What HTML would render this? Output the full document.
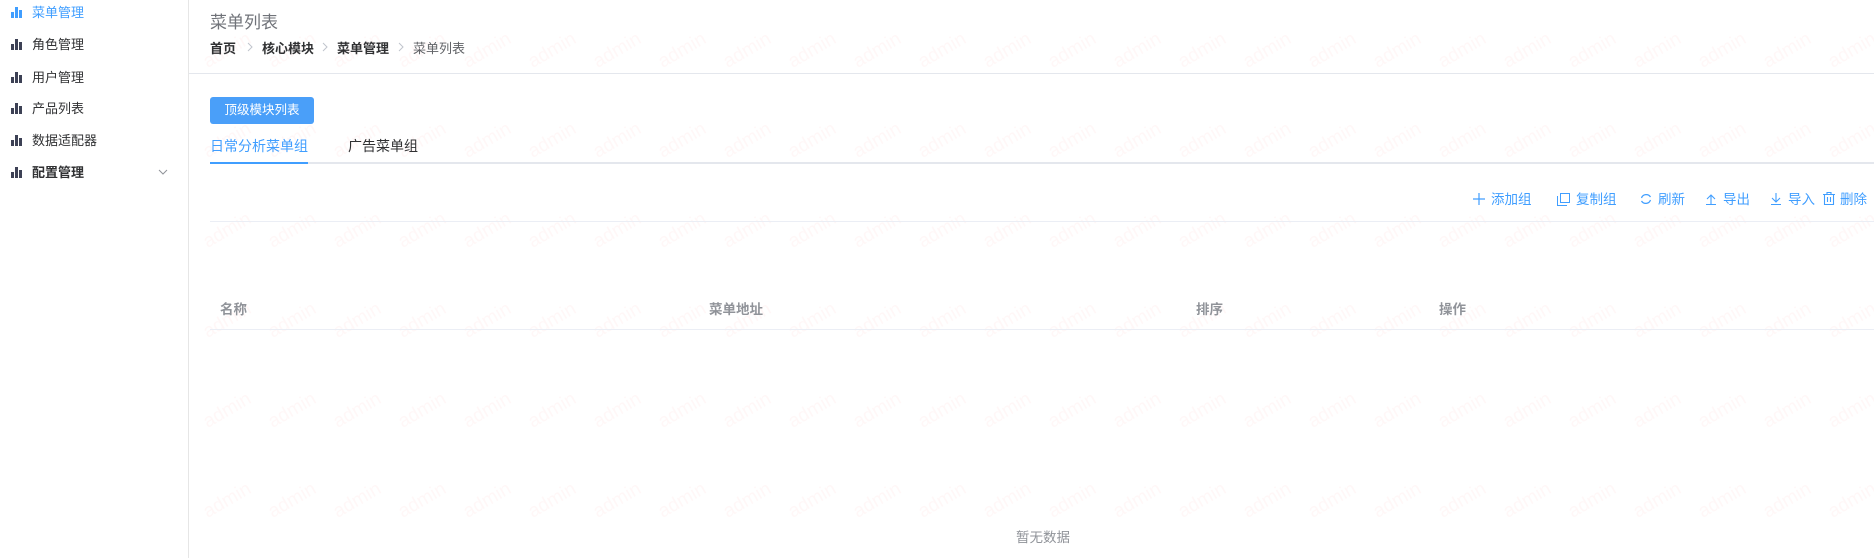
<!DOCTYPE html>
<html><head><meta charset="utf-8"><style>
*{margin:0;padding:0;box-sizing:border-box}
body{width:1874px;height:558px;overflow:hidden;position:relative;font-family:"Liberation Sans","Noto Sans CJK SC",sans-serif;background:#fff url("data:image/svg+xml;utf8,<svg xmlns='http://www.w3.org/2000/svg' width='65' height='90'><text x='32' y='56' font-family='Liberation Sans,sans-serif' font-size='19' fill='rgba(255,60,60,0.045)' text-anchor='middle' transform='rotate(-30 32 50)'>admin</text></svg>") 0 0/65px 90px repeat}
.abs{position:absolute;white-space:nowrap}
#side{position:absolute;left:0;top:0;width:189px;height:558px;background:#fff;border-right:1px solid #e6e6e6}
.it{position:absolute;left:0;width:189px;height:20px;font-size:13px;color:#303133;line-height:20px;white-space:nowrap}
.it .ic{position:absolute;left:11px;top:4px;width:11px;height:11px}
.it span{position:absolute;left:32px;white-space:nowrap}
.tb{position:absolute;top:191px;font-size:13.5px;color:#409eff;line-height:18px;white-space:nowrap}
.th{position:absolute;top:298px;font-size:13.5px;color:#909399;font-weight:bold;white-space:nowrap}
.sep{position:absolute;top:42px}
</style></head><body>
<div id="side">
 <div class="it" style="top:3px;color:#409eff"><svg class="ic" viewBox="0 0 11 11"><rect x="0" y="5" width="3" height="6" fill="#409eff"/><rect x="4" y="0" width="3" height="11" fill="#409eff"/><rect x="8" y="3" width="3" height="8" fill="#409eff"/></svg><span>菜单管理</span></div>
 <div class="it" style="top:35px"><svg class="ic" viewBox="0 0 11 11"><rect x="0" y="5" width="3" height="6" fill="#3d4155"/><rect x="4" y="0" width="3" height="11" fill="#3d4155"/><rect x="8" y="3" width="3" height="8" fill="#3d4155"/></svg><span>角色管理</span></div>
 <div class="it" style="top:68px"><svg class="ic" viewBox="0 0 11 11"><rect x="0" y="5" width="3" height="6" fill="#3d4155"/><rect x="4" y="0" width="3" height="11" fill="#3d4155"/><rect x="8" y="3" width="3" height="8" fill="#3d4155"/></svg><span>用户管理</span></div>
 <div class="it" style="top:99px"><svg class="ic" viewBox="0 0 11 11"><rect x="0" y="5" width="3" height="6" fill="#3d4155"/><rect x="4" y="0" width="3" height="11" fill="#3d4155"/><rect x="8" y="3" width="3" height="8" fill="#3d4155"/></svg><span>产品列表</span></div>
 <div class="it" style="top:131px"><svg class="ic" viewBox="0 0 11 11"><rect x="0" y="5" width="3" height="6" fill="#3d4155"/><rect x="4" y="0" width="3" height="11" fill="#3d4155"/><rect x="8" y="3" width="3" height="8" fill="#3d4155"/></svg><span>数据适配器</span></div>
 <div class="it" style="top:163px;font-weight:bold"><svg class="ic" viewBox="0 0 11 11"><rect x="0" y="5" width="3" height="6" fill="#3d4155"/><rect x="4" y="0" width="3" height="11" fill="#3d4155"/><rect x="8" y="3" width="3" height="8" fill="#3d4155"/></svg><span>配置管理</span>
 <svg style="position:absolute;left:158px;top:6px" width="10" height="6" viewBox="0 0 10 6"><path d="M1 1L5 5L9 1" fill="none" stroke="#909399" stroke-width="1"/></svg></div>
</div>
<div class="abs" style="left:210px;top:8px;font-size:17px;color:#707379">菜单列表</div>
<div class="abs" style="left:210px;top:38px;font-size:13px;color:#303133;font-weight:bold">首页</div>
<svg class="sep" style="left:247px" width="6" height="10"><path d="M1 1L5 5L1 9" fill="none" stroke="#c0c4cc" stroke-width="1"/></svg>
<div class="abs" style="left:262px;top:38px;font-size:13px;color:#303133;font-weight:bold">核心模块</div>
<svg class="sep" style="left:322px" width="6" height="10"><path d="M1 1L5 5L1 9" fill="none" stroke="#c0c4cc" stroke-width="1"/></svg>
<div class="abs" style="left:337px;top:38px;font-size:13px;color:#303133;font-weight:bold">菜单管理</div>
<svg class="sep" style="left:398px" width="6" height="10"><path d="M1 1L5 5L1 9" fill="none" stroke="#c0c4cc" stroke-width="1"/></svg>
<div class="abs" style="left:413px;top:38px;font-size:13px;color:#606266">菜单列表</div>
<div class="abs" style="left:189px;top:73px;width:1685px;height:1px;background:#e4e7ed"></div>
<div class="abs" style="left:210px;top:97px;width:104px;height:27px;background:#4a9ff9;border-radius:3px;color:#fff;font-size:12.5px;text-align:center;line-height:27px">顶级模块列表</div>
<div class="abs" style="left:210px;top:136px;font-size:14px;color:#409eff">日常分析菜单组</div>
<div class="abs" style="left:348px;top:136px;font-size:14px;color:#303133">广告菜单组</div>
<div class="abs" style="left:210px;top:162px;width:1664px;height:2px;background:#e4e7ed"></div>
<div class="abs" style="left:210px;top:162px;width:98px;height:2px;background:#409eff"></div>
<svg class="abs" style="left:1473px;top:193px" width="12" height="12"><path d="M6 0V12M0 6H12" stroke="#409eff" stroke-width="1.2"/></svg>
<div class="tb" style="left:1491px">添加组</div>
<svg class="abs" style="left:1557px;top:193px" width="13" height="13"><rect x="3.5" y="0.5" width="9" height="9" fill="none" stroke="#409eff"/><path d="M0.5 3V12.5H10" fill="none" stroke="#409eff"/></svg>
<div class="tb" style="left:1576px">复制组</div>
<svg class="abs" style="left:1640px;top:193px" width="12" height="12"><path d="M10.5 4A5 5 0 0 0 1.5 5M1.5 8A5 5 0 0 0 10.5 7" fill="none" stroke="#409eff" stroke-width="1.2"/></svg>
<div class="tb" style="left:1658px">刷新</div>
<svg class="abs" style="left:1705px;top:193px" width="12" height="12"><path d="M6 2V11M2 6L6 2L10 6M1 11.5H11" fill="none" stroke="#409eff" stroke-width="1.1"/></svg>
<div class="tb" style="left:1723px">导出</div>
<svg class="abs" style="left:1770px;top:193px" width="12" height="12"><path d="M6 0V9M2 5L6 9L10 5M1 11.5H11" fill="none" stroke="#409eff" stroke-width="1.1"/></svg>
<div class="tb" style="left:1788px">导入</div>
<svg class="abs" style="left:1823px;top:192px" width="12" height="13"><path d="M0 2.5H12M4 2.5V0.5H8V2.5M1.5 2.5V12.5H10.5V2.5M4.5 5V10M7.5 5V10" fill="none" stroke="#409eff" stroke-width="1.1"/></svg>
<div class="tb" style="left:1840px">删除</div>
<div class="abs" style="left:210px;top:221px;width:1664px;height:1px;background:#ebeef5"></div>
<div class="th" style="left:220px">名称</div>
<div class="th" style="left:709px">菜单地址</div>
<div class="th" style="left:1196px">排序</div>
<div class="th" style="left:1439px">操作</div>
<div class="abs" style="left:210px;top:329px;width:1664px;height:1px;background:#ebeef5"></div>
<div class="abs" style="left:1016px;top:526px;font-size:13.5px;color:#909399">暂无数据</div>
</body></html>
